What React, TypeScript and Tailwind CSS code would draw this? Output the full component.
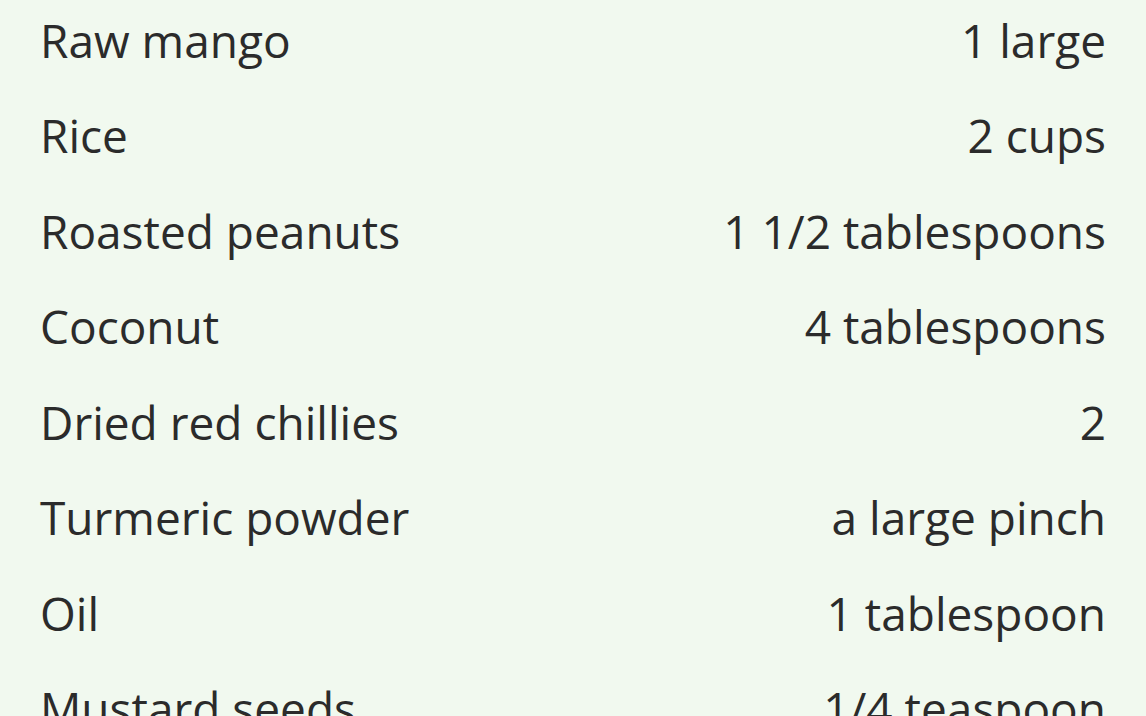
const ingredients = [
  { name: "Raw mango", amount: "1 large" },
  { name: "Rice", amount: "2 cups" },
  { name: "Roasted peanuts", amount: "1 1/2 tablespoons" },
  { name: "Coconut", amount: "4 tablespoons" },
  { name: "Dried red chillies", amount: "2" },
  { name: "Turmeric powder", amount: "a large pinch" },
  { name: "Oil", amount: "1 tablespoon" },
  { name: "Mustard seeds", amount: "1/4 teaspoon" },
];

export default function App() {
  return (
    <div className="h-[716px] w-[1146px] overflow-hidden bg-[#f1f9ef] font-['Open_Sans',sans-serif] text-[#2b2b2b]">
      <ul className="-mt-2 pl-10 pr-10">
        {ingredients.map((item) => (
          <li
            key={item.name}
            className="flex h-[95.5px] items-center justify-between text-[46px] leading-none"
          >
            <span>{item.name}</span>
            <span>{item.amount}</span>
          </li>
        ))}
      </ul>
    </div>
  );
}
